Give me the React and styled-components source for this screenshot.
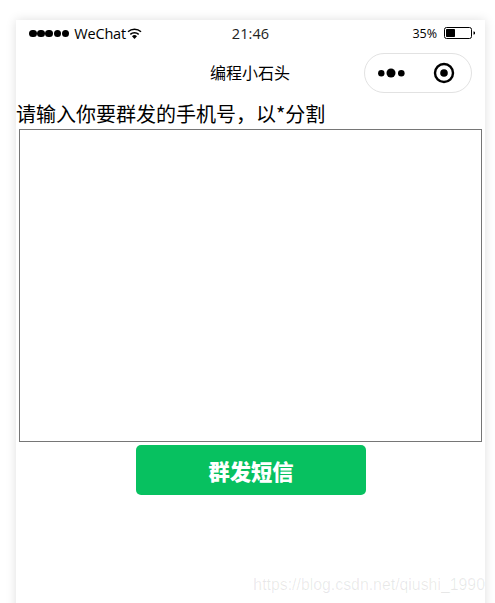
import React from "react";
import styled, { createGlobalStyle } from "styled-components";

const Global = createGlobalStyle`
  html, body { margin: 0; padding: 0; background: #fff; }
  #root { width: 495px; height: 603px; overflow: hidden; }
`;

const CJK = `"Noto Sans CJK SC", "Noto Sans", sans-serif`;

const Stage = styled.div`
  width: 495px;
  height: 603px;
  padding: 20px 10px 0 16px;
  box-sizing: border-box;
  background: #fff;
  overflow: hidden;
`;

const Phone = styled.div`
  position: relative;
  width: 469px;
  height: 600px;
  background: #fff;
  box-shadow: 0 0 10px rgba(0, 0, 0, 0.13);
  display: flex;
  flex-direction: column;
  color: #000;
`;

const StatusBar = styled.div`
  height: 27px;
  display: grid;
  grid-template-columns: 1fr auto 1fr;
  align-items: center;
  padding: 0 9px 0 13px;
  font-family: "Open Sans", "Noto Sans", sans-serif;
`;

const Left = styled.div`
  display: flex;
  align-items: center;
  gap: 5px;
  font-size: 14.5px;
  letter-spacing: -0.2px;
`;

const Dots = styled.div`
  display: flex;
  gap: 0.6px;
`;

const Dot = styled.span`
  width: 7.6px;
  height: 7.6px;
  border-radius: 50%;
  background: #000;
`;

const Time = styled.div`
  font-size: 14.5px;
  color: #222;
  margin-left: -4px;
  letter-spacing: 0.1px;
`;

const Right = styled.div`
  display: flex;
  justify-content: flex-end;
  align-items: center;
  gap: 7px;
  font-size: 12.5px;
  letter-spacing: -0.05px;
`;

const WifiSlot = styled.span`
  display: flex;
  margin-left: -4px;
`;

const NavBar = styled.div`
  position: relative;
  height: 50px;
  display: flex;
  align-items: center;
  justify-content: center;
`;

const NavTitle = styled.div`
  font-family: ${CJK};
  font-size: 16px;
  margin-top: -1px;
  margin-left: -1px;
`;

const Capsule = styled.div`
  position: absolute;
  right: 13px;
  top: 6px;
  width: 108px;
  height: 40px;
  box-sizing: border-box;
  border: 1px solid #e2e2e2;
  border-radius: 20px;
  display: flex;
  align-items: center;
  padding: 0 16px 0 12px;
  justify-content: space-between;
`;

const Label = styled.div`
  font-family: ${CJK};
  font-size: 20px;
  line-height: 26px;
  height: 26px;
  margin-top: 4px;
  white-space: nowrap;
`;

const Area = styled.textarea`
  display: block;
  box-sizing: border-box;
  width: 463px;
  height: 313px;
  margin: 2px 0 0 3px;
  border: 1px solid #767676;
  background: #fff;
  padding: 2px;
  resize: none;
  outline: none;
`;

const Send = styled.button`
  display: block;
  width: 230px;
  height: 50px;
  margin: 3px 0 0 120px;
  border: 0;
  border-radius: 5px;
  background: #07c160;
  color: #fff;
  font-family: ${CJK};
  font-size: 21.3px;
  font-weight: 900;
  padding: 0;
`;

const Watermark = styled.div`
  position: absolute;
  right: 0;
  top: 554px;
  font-family: "Liberation Sans", Arial, sans-serif;
  font-size: 15.85px;
  line-height: 22px;
  color: rgba(0, 0, 0, 0.09);
  white-space: nowrap;
`;

const Wifi = () => (
  <svg width="15" height="11" viewBox="0 0 15 11">
    <path d="M7.5 11 5 8.2a3.6 3.6 0 0 1 5 0Z" fill="#000" />
    <path d="M3.3 6.4a6.2 6.2 0 0 1 8.4 0" fill="none" stroke="#000" strokeWidth="1.5" />
    <path d="M1 3.8a9.6 9.6 0 0 1 13 0" fill="none" stroke="#000" strokeWidth="1.5" />
  </svg>
);

const Battery = () => (
  <svg width="32" height="13" viewBox="0 0 32 13">
    <rect x="0.5" y="0.5" width="27" height="11" rx="2" fill="none" stroke="#000" />
    <rect x="2" y="2" width="9" height="8" rx="0.8" fill="#000" />
    <path d="M29.5 4.2 31 5v2l-1.5.8Z" fill="#000" />
  </svg>
);

const MoreDots = () => (
  <svg width="28" height="12" viewBox="0 0 28 12">
    <circle cx="4.3" cy="6.3" r="3.2" fill="#000" />
    <circle cx="14" cy="6" r="4.5" fill="#000" />
    <circle cx="24.3" cy="6.3" r="3.3" fill="#000" />
  </svg>
);

const Target = () => (
  <svg width="22" height="22" viewBox="0 0 22 22">
    <circle cx="11" cy="11" r="9" fill="none" stroke="#000" strokeWidth="2.4" />
    <circle cx="11" cy="11" r="3.8" fill="#000" />
  </svg>
);

export default function App() {
  return (
    <Stage>
      <Global />
      <Phone>
        <StatusBar>
          <Left>
            <Dots>
              {[0, 1, 2, 3, 4].map((i) => (
                <Dot key={i} />
              ))}
            </Dots>
            <span>WeChat</span>
            <WifiSlot>
              <Wifi />
            </WifiSlot>
          </Left>
          <Time>21:46</Time>
          <Right>
            <span>35%</span>
            <Battery />
          </Right>
        </StatusBar>
        <NavBar>
          <NavTitle>编程小石头</NavTitle>
          <Capsule>
            <MoreDots />
            <Target />
          </Capsule>
        </NavBar>
        <Label>请输入你要群发的手机号，以*分割</Label>
        <Area />
        <Send>群发短信</Send>
        <Watermark>https://blog.csdn.net/qiushi_1990</Watermark>
      </Phone>
    </Stage>
  );
}
